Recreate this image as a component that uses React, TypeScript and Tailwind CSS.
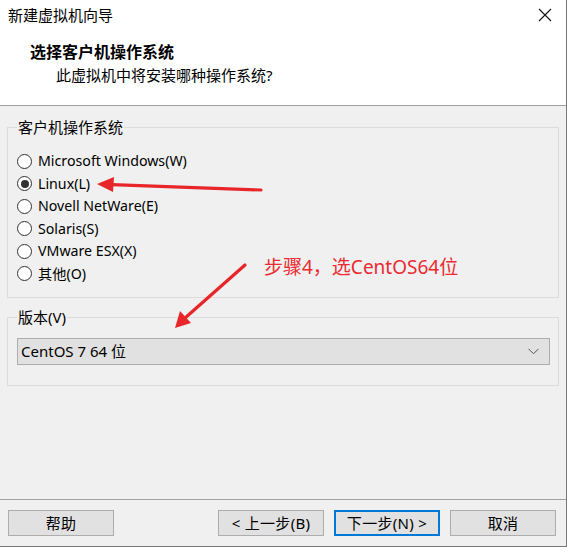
import React from "react";

const font = { fontFamily: '"Noto Sans", "Noto Sans CJK SC", sans-serif' };

function Radio({ label, checked }: { label: string; checked?: boolean }) {
  return (
    <div className="flex h-[22.5px] items-center">
      <span className="flex h-[15px] w-[15px] items-center justify-center rounded-full border border-[#333333] bg-white">
        {checked && <span className="h-[8px] w-[8px] rounded-full bg-[#333333]" />}
      </span>
      <span className="ml-[6px] text-[14.2px] leading-none text-black">{label}</span>
    </div>
  );
}

function Btn({ label, focused }: { label: string; focused?: boolean }) {
  return (
    <div
      className={
        "flex h-[26px] w-[106px] items-center justify-center bg-[#e1e1e1] text-[15px] tracking-[0.3px] text-black " +
        (focused ? "border-2 border-[#0078d7]" : "border border-[#adadad]")
      }
    >
      {label}
    </div>
  );
}

export default function App() {
  return (
    <div className="relative h-[557px] w-[572px] bg-white" style={font}>
      <div className="flex h-[547px] w-[567px] flex-col border-b border-r border-[#777777]">
        {/* title + header */}
        <div className="h-[105px] bg-white">
          <div className="flex h-[30px] items-center justify-between pl-[8px] pr-[14px]">
            <span className="text-[15px] text-black">新建虚拟机向导</span>
            <svg width="14" height="14" viewBox="0 0 14 14">
              <path d="M1 1 L13 13 M13 1 L1 13" stroke="#111" strokeWidth="1.1" />
            </svg>
          </div>
          <div className="pl-[30px] pt-[12px] text-[16px] font-bold leading-[20px] text-black">选择客户机操作系统</div>
          <div className="pl-[56px] pt-[3px] text-[15px] leading-[20px] text-black">此虚拟机中将安装哪种操作系统?</div>
        </div>
        <div className="h-px bg-[#a0a0a0]" />
        {/* body */}
        <div className="flex flex-1 flex-col bg-[#f0f0f0]">
          <div className="px-[7px] pt-[11px]">
            <fieldset className="h-[181px] border border-[#dcdcdc] pl-[9px] pt-[13px]">
              <legend className="px-px text-[15px] leading-[20px] text-black">客户机操作系统</legend>
              <Radio label="Microsoft Windows(W)" />
              <Radio label="Linux(L)" checked />
              <Radio label="Novell NetWare(E)" />
              <Radio label="Solaris(S)" />
              <Radio label="VMware ESX(X)" />
              <Radio label="其他(O)" />
            </fieldset>
            <fieldset className="mt-[9px] h-[79px] border border-[#dcdcdc] pl-[9px] pr-[8px] pt-[11px]">
              <legend className="px-px text-[15px] leading-[20px] text-black">版本(V)</legend>
              <div className="flex h-[27px] items-center justify-between border border-[#adadad] bg-[#e1e1e1] pl-[3px] pr-[10px]">
                <span className="text-[15px] text-black">CentOS 7 64 位</span>
                <svg width="11" height="7" viewBox="0 0 11 7">
                  <path d="M0.5 0.8 L5.5 5.8 L10.5 0.8" stroke="#555" strokeWidth="1" fill="none" />
                </svg>
              </div>
            </fieldset>
          </div>
          <div className="flex-1" />
          <div className="h-px bg-[#a0a0a0]" />
          <div className="flex h-[46px] items-start pl-[8px] pr-[10px] pt-[10px]">
            <Btn label="帮助" />
            <div className="flex-1" />
            <div className="flex gap-[10px]">
              <Btn label="< 上一步(B)" />
              <Btn label="下一步(N) >" focused />
              <Btn label="取消" />
            </div>
          </div>
        </div>
      </div>

      {/* annotations */}
      <div className="absolute left-[264px] top-[255px] text-[19px] leading-[25px] text-[#ea2a30]">步骤4，选CentOS64位</div>
      <svg className="pointer-events-none absolute left-0 top-0" width="572" height="557">
        <line x1="261" y1="190" x2="112" y2="184.6" stroke="#e8262a" strokeWidth="3.2" strokeLinecap="round" />
        <polygon points="97,184 114,177 113,192" fill="#e8262a" />
        <line x1="245" y1="265" x2="185" y2="318" stroke="#e8262a" strokeWidth="3.2" strokeLinecap="round" />
        <polygon points="175,328 180,311 191,323" fill="#e8262a" />
      </svg>
    </div>
  );
}
